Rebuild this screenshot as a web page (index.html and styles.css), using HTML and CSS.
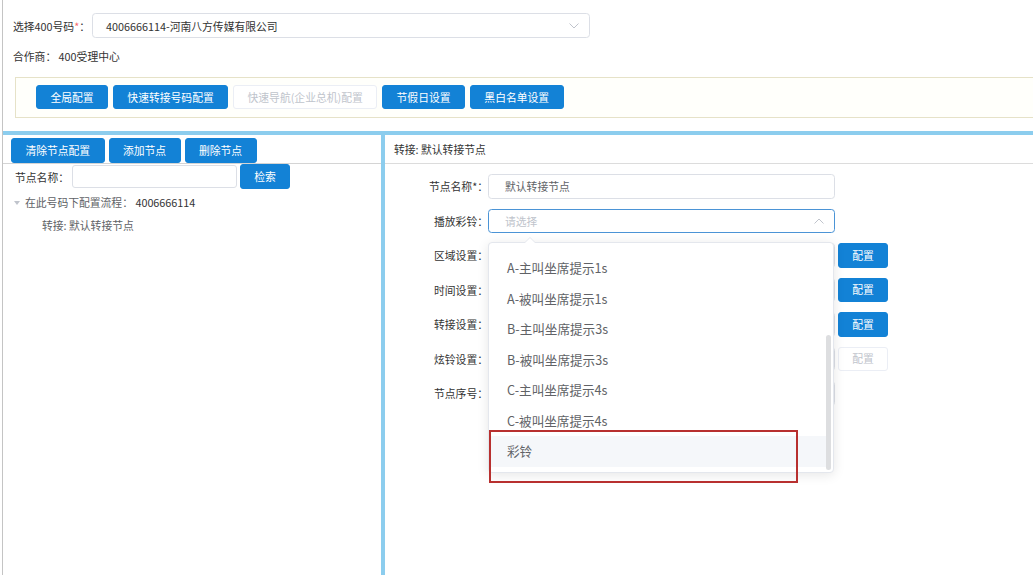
FILE: index.html
```html
<!DOCTYPE html>
<html lang="zh-CN">
<head>
<meta charset="utf-8">
<title>节点配置</title>
<link rel="stylesheet" href="styles.css">
</head>
<body>
<div class="page">
  <section class="top">
    <div class="field-row">
      <label class="lbl">选择400号码<span class="req">*</span>：</label>
      <div class="select top-select">
        <span class="val">4006666114-河南八方传媒有限公司</span>
        <svg class="chev" width="10" height="6" viewBox="0 0 10 6"><polyline points="0.5,0.5 5,5 9.5,0.5" fill="none" stroke="#c0c4cc" stroke-width="1"/></svg>
      </div>
    </div>
    <div class="partner">合作商： 400受理中心</div>
    <div class="btn-panel">
      <button class="btn">全局配置</button>
      <button class="btn">快速转接号码配置</button>
      <button class="btn disabled">快速导航(企业总机)配置</button>
      <button class="btn">节假日设置</button>
      <button class="btn">黑白名单设置</button>
    </div>
  </section>

  <div class="hbar"></div>

  <div class="main">
    <aside class="left">
      <div class="toolbar">
        <button class="btn">清除节点配置</button>
        <button class="btn">添加节点</button>
        <button class="btn">删除节点</button>
      </div>
      <div class="search">
        <span class="slabel">节点名称：</span>
        <div class="sinput"></div>
        <button class="btn sbtn">检索</button>
      </div>
      <ul class="tree">
        <li><span class="caret"></span>在此号码下配置流程： <span class="num">4006666114</span>
          <ul>
            <li>转接: 默认转接节点</li>
          </ul>
        </li>
      </ul>
    </aside>

    <div class="vbar"></div>

    <section class="right">
      <div class="rhead">转接: 默认转接节点</div>
      <div class="form">
        <div class="frow">
          <span class="flabel">节点名称*：</span>
          <div class="finput">默认转接节点</div>
        </div>
        <div class="frow">
          <span class="flabel">播放彩铃：</span>
          <div class="finput focus">
            <span class="placeholder">请选择</span>
            <svg class="chev" width="10" height="6" viewBox="0 0 10 6"><polyline points="0.5,5.5 5,1 9.5,5.5" fill="none" stroke="#c0c4cc" stroke-width="1"/></svg>
            <div class="dropdown">
              <ul class="options">
                <li>A-主叫坐席提示1s</li>
                <li>A-被叫坐席提示1s</li>
                <li>B-主叫坐席提示3s</li>
                <li>B-被叫坐席提示3s</li>
                <li>C-主叫坐席提示4s</li>
                <li>C-被叫坐席提示4s</li>
                <li class="hover">彩铃</li>
              </ul>
              <div class="thumb"></div>
              <div class="annot"></div>
            </div>
          </div>
        </div>
        <div class="frow">
          <span class="flabel">区域设置：</span>
          <div class="finput"></div>
          <button class="btn cbtn">配置</button>
        </div>
        <div class="frow">
          <span class="flabel">时间设置：</span>
          <div class="finput"></div>
          <button class="btn cbtn">配置</button>
        </div>
        <div class="frow">
          <span class="flabel">转接设置：</span>
          <div class="finput"></div>
          <button class="btn cbtn">配置</button>
        </div>
        <div class="frow">
          <span class="flabel">炫铃设置：</span>
          <div class="finput"></div>
          <button class="btn cbtn disabled">配置</button>
        </div>
        <div class="frow">
          <span class="flabel">节点序号：</span>
          <div class="finput"></div>
        </div>
      </div>
    </section>
  </div>
</div>
</body>
</html>
```

FILE: styles.css
```css
body {
  margin: 0;
  font-family: "Noto Sans CJK SC", "Noto Sans", sans-serif;
  font-size: 10.8px;
  color: #333;
  background: #fff;
}

.page {
  margin-left: 2px;
  border-left: 1px solid #c4c4c4;
  height: 575px;
  overflow: hidden;
  display: flex;
  flex-direction: column;
}

/* ---------- top ---------- */
.top {
  padding: 13px 0 0 10px;
}

.field-row {
  display: flex;
  align-items: center;
  height: 25px;
}

.lbl {
  width: 79px;
  white-space: nowrap;
}

.req {
  color: #f56c6c;
}

.select {
  box-sizing: border-box;
  border: 1px solid #dcdfe6;
  border-radius: 3.6px;
  display: flex;
  align-items: center;
  justify-content: space-between;
  background: #fff;
}

.top-select {
  width: 498px;
  height: 25px;
  padding: 0 10px 0 13px;
}

.partner {
  margin-top: 8px;
  line-height: 20px;
}

.btn-panel {
  margin: 11px 0 0 2px;
  border: 1px solid #e6e2c8;
  border-right: 0;
  background: #fffffb;
  padding: 7px 0 8px 20px;
  display: flex;
  gap: 5px;
}

.btn {
  font: inherit;
  box-sizing: border-box;
  height: 24px;
  padding: 0 13.4px;
  border: 1px solid #1382d6;
  background: #1382d6;
  color: #fff;
  border-radius: 3px;
  white-space: nowrap;
  cursor: pointer;
  line-height: 1;
}

.btn.disabled {
  background: #fff;
  border-color: #ebeef5;
  color: #c0c4cc;
  cursor: not-allowed;
}

.hbar {
  height: 4px;
  background: #8ccdee;
  margin-top: 13px;
  flex: none;
}

/* ---------- main ---------- */
.main {
  flex: 1;
  display: flex;
  min-height: 0;
}

.left {
  width: 378px;
  flex: none;
}

.vbar {
  width: 4px;
  background: #8ccdee;
  flex: none;
}

.right {
  flex: 1;
}

/* left pane */
.toolbar {
  display: flex;
  gap: 4px;
  padding: 3px 0 0 8px;
  border-bottom: 1px solid #d4d4d4;
}

.toolbar .btn {
  height: 25px;
}

.search {
  display: flex;
  align-items: center;
  height: 25px;
  padding-left: 12px;
}

.slabel {
  width: 57px;
  white-space: nowrap;
}

.sinput {
  width: 165px;
  height: 23px;
  box-sizing: border-box;
  border: 1px solid #dcdfe6;
  border-radius: 3px;
}

.sbtn {
  height: 25px;
  margin-left: 3px;
  width: 50px;
  padding: 0;
}

.tree {
  list-style: none;
  margin: 3px 0 0;
  padding: 0 0 0 11px;
  line-height: 20px;
  color: #606266;
}

.tree .num {
  color: #333;
}

.caret {
  display: inline-block;
  width: 0;
  height: 0;
  border-left: 3px solid transparent;
  border-right: 3px solid transparent;
  border-top: 4px solid #c0c4cc;
  margin-right: 5px;
  vertical-align: 2px;
}

.tree ul {
  list-style: none;
  margin: 3px 0 0;
  padding-left: 28px;
}

/* right pane */
.rhead {
  height: 28px;
  line-height: 28px;
  padding-left: 9px;
  border-bottom: 1px solid #dcdcdc;
}

.form {
  padding-top: 10px;
  display: flex;
  flex-direction: column;
  gap: 10px;
}

.frow {
  display: flex;
  align-items: center;
  height: 24.5px;
}

.flabel {
  width: 103px;
  text-align: right;
  white-space: nowrap;
}

.finput {
  width: 347px;
  height: 100%;
  box-sizing: border-box;
  border: 1px solid #dcdfe6;
  border-radius: 3.6px;
  padding-left: 16px;
  display: flex;
  align-items: center;
  color: #606266;
}

.finput.focus {
  border-color: #4b94d6;
  position: relative;
  justify-content: space-between;
  padding-right: 10px;
}

.placeholder {
  color: #c0c4cc;
}

.cbtn {
  margin-left: 3px;
  width: 50px;
  padding: 0;
  height: 24.5px;
}

/* dropdown */
.dropdown {
  position: absolute;
  left: -1px;
  top: 32px;
  width: 346px;
  height: 231px;
  box-sizing: border-box;
  border: 1px solid #e4e7ed;
  border-radius: 4px;
  background: #fff;
  box-shadow: 0 2px 12px rgba(0, 0, 0, 0.1);
  z-index: 10;
}

.dropdown::before,
.dropdown::after {
  content: "";
  position: absolute;
  left: 35px;
  width: 0;
  height: 0;
  border: 6px solid transparent;
  border-top-width: 0;
}

.dropdown::before {
  top: -6px;
  border-bottom-color: #e4e7ed;
}

.dropdown::after {
  top: -5px;
  border-bottom-color: #fff;
}

.options {
  list-style: none;
  margin: 0 7px 0 0;
  padding: 10.75px 0 0;
}

.options li {
  height: 30.5px;
  line-height: 30.5px;
  padding-left: 18px;
  font-size: 12.6px;
  color: #606266;
  white-space: nowrap;
}

.options li.hover {
  background: #f5f7fa;
}

.thumb {
  position: absolute;
  right: 2px;
  top: 92px;
  width: 5px;
  height: 135px;
  background: rgba(144, 147, 153, 0.3);
  border-radius: 3px;
}

.annot {
  position: absolute;
  left: 0;
  top: 187px;
  width: 309px;
  height: 53px;
  box-sizing: border-box;
  border: 2px solid #b8302f;
}
```
